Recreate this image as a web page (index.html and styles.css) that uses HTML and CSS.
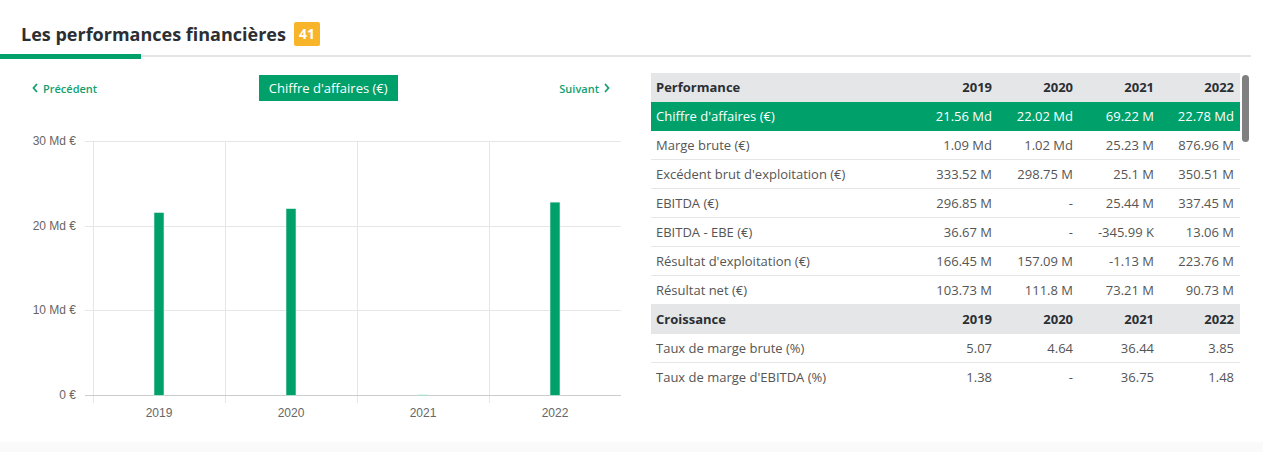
FILE: index.html
```html
<!DOCTYPE html>
<html lang="fr">
<head>
<meta charset="utf-8">
<title>Les performances financières</title>
<link rel="stylesheet" href="styles.css">
</head>
<body>
<div class="card">
  <div class="head">
    <h2 class="title">Les performances financières</h2>
    <span class="badge">41</span>
  </div>
  <div class="tabline">
    <div class="tab-active"></div>
    <div class="tab-rest"></div>
  </div>
  <div class="content">
    <div class="chart-col">
      <div class="nav">
        <a class="nav-link"><svg class="chev" viewBox="0 0 6 10" width="6" height="10"><path d="M5 1 L1.5 5 L5 9" fill="none" stroke="currentColor" stroke-width="1.8"/></svg>Précédent</a>
        <span class="metric-btn">Chiffre d'affaires (€)</span>
        <a class="nav-link">Suivant<svg class="chev chev-r" viewBox="0 0 6 10" width="6" height="10"><path d="M1 1 L4.5 5 L1 9" fill="none" stroke="currentColor" stroke-width="1.8"/></svg></a>
      </div>
      <svg class="chart" viewBox="0 125 640 300" width="640" height="300">
        <g stroke="#e6e6e6" stroke-width="1">
          <line x1="85" y1="141.5" x2="621" y2="141.5"/>
          <line x1="85" y1="226.5" x2="621" y2="226.5"/>
          <line x1="85" y1="310.5" x2="621" y2="310.5"/>
          <line x1="93.5" y1="141" x2="93.5" y2="403"/>
          <line x1="225.5" y1="141" x2="225.5" y2="403"/>
          <line x1="357.5" y1="141" x2="357.5" y2="403"/>
          <line x1="489.5" y1="141" x2="489.5" y2="403"/>
        </g>
        <line x1="85" y1="395.5" x2="621" y2="395.5" stroke="#cccccc" stroke-width="1"/>
        <g class="ylab" text-anchor="end">
          <text x="76" y="145">30 Md €</text>
          <text x="76" y="230">20 Md €</text>
          <text x="76" y="314">10 Md €</text>
          <text x="76" y="399">0 €</text>
        </g>
        <g class="xlab" text-anchor="middle">
          <text x="159" y="417">2019</text>
          <text x="291" y="417">2020</text>
          <text x="423" y="417">2021</text>
          <text x="555" y="417">2022</text>
        </g>
        <g fill="#00a06b" stroke="#e3f5ee" stroke-width="0.6">
          <rect x="154" y="212.5" width="10" height="183"/>
          <rect x="286" y="208.6" width="10" height="186.9"/>
          <rect x="418" y="394.9" width="10" height="0.6"/>
          <rect x="550" y="202.1" width="10" height="193.4"/>
        </g>
      </svg>
    </div>
    <div class="table-col">
      <div class="table-wrap">
        <table class="perf">
          <colgroup><col class="c-label"><col class="c-num"><col class="c-num"><col class="c-num"><col class="c-num"></colgroup>
          <tr class="hrow"><th>Performance</th><th>2019</th><th>2020</th><th>2021</th><th>2022</th></tr>
          <tr class="active"><td>Chiffre d'affaires (€)</td><td>21.56 Md</td><td>22.02 Md</td><td>69.22 M</td><td>22.78 Md</td></tr>
          <tr><td>Marge brute (€)</td><td>1.09 Md</td><td>1.02 Md</td><td>25.23 M</td><td>876.96 M</td></tr>
          <tr><td>Excédent brut d'exploitation (€)</td><td>333.52 M</td><td>298.75 M</td><td>25.1 M</td><td>350.51 M</td></tr>
          <tr><td>EBITDA (€)</td><td>296.85 M</td><td>-</td><td>25.44 M</td><td>337.45 M</td></tr>
          <tr><td>EBITDA - EBE (€)</td><td>36.67 M</td><td>-</td><td>-345.99 K</td><td>13.06 M</td></tr>
          <tr><td>Résultat d'exploitation (€)</td><td>166.45 M</td><td>157.09 M</td><td>-1.13 M</td><td>223.76 M</td></tr>
          <tr><td>Résultat net (€)</td><td>103.73 M</td><td>111.8 M</td><td>73.21 M</td><td>90.73 M</td></tr>
          <tr class="hrow"><th>Croissance</th><th>2019</th><th>2020</th><th>2021</th><th>2022</th></tr>
          <tr><td>Taux de marge brute (%)</td><td>5.07</td><td>4.64</td><td>36.44</td><td>3.85</td></tr>
          <tr class="last"><td>Taux de marge d'EBITDA (%)</td><td>1.38</td><td>-</td><td>36.75</td><td>1.48</td></tr>
        </table>
        <div class="scrollbar"></div>
      </div>
    </div>
  </div>
  <div class="foot"></div>
</div>
</body>
</html>
```

FILE: styles.css
```css
html, body {
  margin: 0;
  padding: 0;
  background: #ffffff;
}

body {
  font-family: "Open Sans", "Liberation Sans", sans-serif;
  color: #555555;
  width: 1273px;
  height: 452px;
  overflow: hidden;
}

.card {
  width: 1263px;
}

.head {
  display: flex;
  align-items: center;
  height: 24px;
  padding: 22px 0 0 21px;
  margin-bottom: 8px;
}

.title {
  margin: 0;
  font-size: 18px;
  font-weight: 700;
  color: #2b2f33;
  line-height: 24px;
}

.badge {
  margin-left: 8px;
  width: 26px;
  height: 24px;
  line-height: 24px;
  border-radius: 2px;
  background: #f9b52a;
  color: #ffffff;
  font-weight: 700;
  font-size: 14px;
  text-align: center;
}

.tabline {
  display: flex;
  align-items: flex-start;
  width: 1251px;
  height: 5px;
}

.tab-active {
  width: 141px;
  height: 5px;
  background: #00a06b;
}

.tab-rest {
  flex: 1;
  height: 2px;
  margin-top: 1px;
  background: #e5e5e5;
}

.content {
  display: flex;
  align-items: flex-start;
}

.chart-col {
  width: 640px;
  padding-top: 16px;
}

.nav {
  display: flex;
  align-items: center;
  justify-content: space-between;
  height: 26px;
  padding: 0 30px 0 32px;
}

.nav-link {
  display: flex;
  align-items: center;
  color: #12a06f;
  font-size: 11px;
  font-weight: 600;
  cursor: pointer;
}

.chev {
  margin-right: 5px;
}

.chev-r {
  margin-right: 0;
  margin-left: 5px;
}

.metric-btn {
  display: block;
  height: 26px;
  line-height: 26px;
  padding: 0 10px;
  background: #00a06b;
  color: #ffffff;
  font-size: 13px;
}

.chart {
  display: block;
  margin-top: 24px;
}

.ylab text,
.xlab text {
  font-family: "Liberation Sans", Arial, sans-serif;
  font-size: 12px;
  fill: #666666;
}

.table-col {
  margin-left: 11px;
  padding-top: 14px;
}

.table-wrap {
  display: flex;
  align-items: flex-start;
}

.perf {
  width: 589px;
  border-collapse: collapse;
  table-layout: fixed;
  font-size: 13px;
}

.c-label {
  width: 265px;
}

.c-num {
  width: 81px;
}

.perf th,
.perf td {
  height: 28px;
  padding: 0 5px;
  white-space: nowrap;
  text-align: right;
  border-bottom: 1px solid #e6e6e6;
}

.perf th:first-child,
.perf td:first-child {
  text-align: left;
}

.perf th:last-child,
.perf td:last-child {
  padding-right: 6px;
}

.perf th {
  background: #e5e6e8;
  color: #2b2f33;
  font-weight: 700;
  border-bottom: 1px solid #e5e6e8;
}

.perf tr.active td {
  background: #00a06b;
  color: #ffffff;
  border-bottom: 1px solid #00a06b;
}

.perf tr.last td {
  border-bottom: none;
}

.scrollbar {
  width: 7px;
  height: 67px;
  margin: 2px 0 0 2px;
  border-radius: 4px;
  background: #808080;
}

.foot {
  height: 10px;
  margin-top: 17px;
  background: #fafafa;
}
```
